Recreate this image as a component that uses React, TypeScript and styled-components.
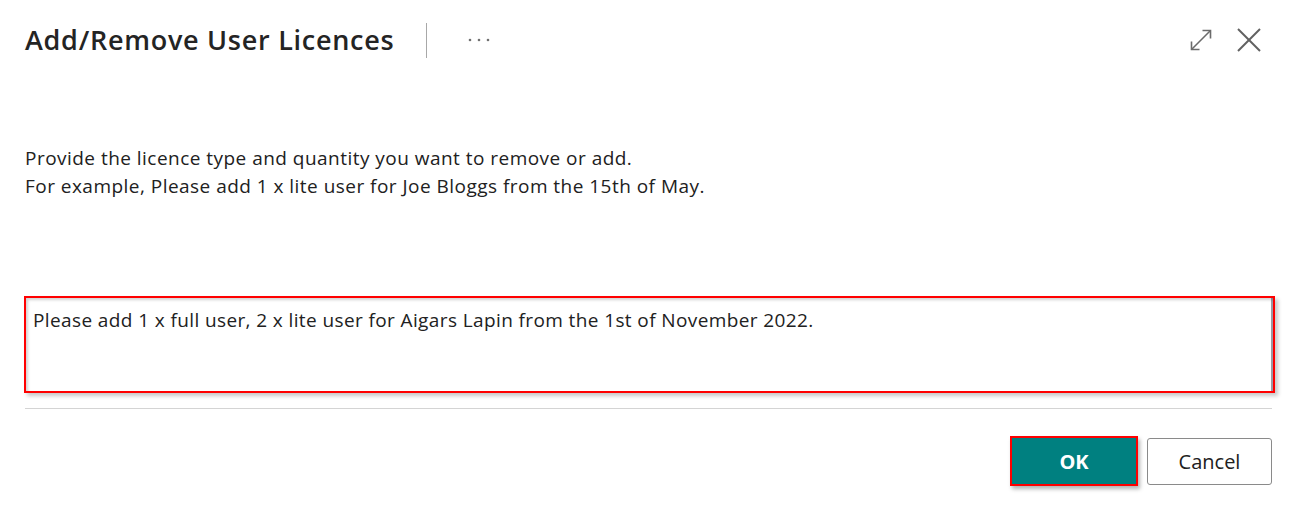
import React from "react";
import styled, { createGlobalStyle } from "styled-components";

const Global = createGlobalStyle`
  html, body { margin: 0; padding: 0; background: #ffffff; }
  body { font-family: "Open Sans", "Noto Sans", sans-serif; color: #212121; }
  * { box-sizing: border-box; }
`;

const Dialog = styled.div`
  width: 1297px;
  height: 508px;
  padding: 0 25px 0 25px;
  display: flex;
  flex-direction: column;
  background: #fff;
`;

const Header = styled.div`
  display: flex;
  align-items: center;
  height: 40px;
  margin-top: 20px;
`;

const Title = styled.h1`
  margin: 0;
  font-size: 27px;
  font-weight: 600;
  color: #242424;
  letter-spacing: 0.73px;
  line-height: 40px;
`;

const Divider = styled.div`
  width: 1px;
  height: 35px;
  background: #a8a8a8;
  margin-left: 32px;
`;

const MoreButton = styled.button`
  border: none;
  background: transparent;
  padding: 0;
  margin-left: 41px;
  display: flex;
  align-items: center;
  height: 20px;
  cursor: pointer;
`;

const HeaderActions = styled.div`
  margin-left: auto;
  margin-right: 11px;
  display: flex;
  align-items: center;
  gap: 24px;
`;

const IconButton = styled.button`
  border: none;
  background: transparent;
  padding: 0;
  width: 24px;
  height: 24px;
  display: flex;
  align-items: center;
  justify-content: center;
  cursor: pointer;
`;

const Description = styled.p`
  margin: 84px 0 0 0;
  font-size: 19px;
  letter-spacing: 0.47px;
  line-height: 28px;
  color: #212121;
`;

const Input = styled.textarea`
  display: block;
  margin-top: 96px;
  margin-left: -1px;
  width: 1251px;
  height: 97px;
  border: 2px solid #ff0000;
  padding: 10px 8px 0 7px;
  font-family: "Open Sans", "Noto Sans", sans-serif;
  font-size: 19px;
  letter-spacing: 0.39px;
  line-height: 24px;
  color: #212121;
  resize: none;
  outline: none;
  box-shadow: inset 2px 2px 3px rgba(0, 0, 0, 0.18), inset -2px 0 0 #9a9aa6,
    3px 3px 4px rgba(0, 0, 0, 0.22);
  background: #fff;
`;

const Separator = styled.hr`
  margin: 15px 0 0 0;
  border: none;
  border-top: 1px solid #d4d4d4;
  width: 1247px;
`;

const Footer = styled.div`
  display: flex;
  justify-content: flex-end;
  align-items: center;
  gap: 9px;
  margin-top: 27px;
`;

const PrimaryButton = styled.button`
  width: 128px;
  height: 50px;
  background: #008080;
  border: 2px solid #ff0000;
  color: #fff;
  font-family: "Open Sans", "Noto Sans", sans-serif;
  font-weight: 700;
  font-size: 20px;
  box-shadow: 2px 3px 4px rgba(0, 0, 0, 0.3);
  cursor: pointer;
`;

const SecondaryButton = styled.button`
  width: 125px;
  height: 47px;
  background: #fff;
  border: 1px solid #8a8a8a;
  border-radius: 3px;
  color: #212121;
  font-family: "Open Sans", "Noto Sans", sans-serif;
  font-size: 20px;
  font-weight: 400;
  cursor: pointer;
`;

export default function App() {
  return (
    <>
      <Global />
      <Dialog>
        <Header>
          <Title>Add/Remove User Licences</Title>
          <Divider />
          <MoreButton aria-label="More options">
            <svg width="22" height="6" viewBox="0 0 22 6">
              <circle cx="2" cy="3" r="1.3" fill="#707070" />
              <circle cx="11" cy="3" r="1.3" fill="#707070" />
              <circle cx="20" cy="3" r="1.3" fill="#707070" />
            </svg>
          </MoreButton>
          <HeaderActions>
            <IconButton aria-label="Expand">
              <svg width="24" height="24" viewBox="0 0 24 24" fill="none" stroke="#6b6b6b" strokeWidth="1.6">
                <path d="M2.5 21.5 L21.5 2.5" />
                <path d="M13.5 2.5 H21.5 V10.5" />
                <path d="M2.5 13.5 V21.5 H10.5" />
              </svg>
            </IconButton>
            <IconButton aria-label="Close">
              <svg width="24" height="24" viewBox="0 0 24 24" fill="none" stroke="#616161" strokeWidth="2">
                <path d="M1 1 L23 23" />
                <path d="M23 1 L1 23" />
              </svg>
            </IconButton>
          </HeaderActions>
        </Header>
        <Description>
          Provide the licence type and quantity you want to remove or add.
          <br />
          For example, Please add 1 x lite user for Joe Bloggs from the 15th of May.
        </Description>
        <Input
          readOnly
          defaultValue="Please add 1 x full user, 2 x lite user for Aigars Lapin from the 1st of November 2022."
        />
        <Separator />
        <Footer>
          <PrimaryButton>OK</PrimaryButton>
          <SecondaryButton>Cancel</SecondaryButton>
        </Footer>
      </Dialog>
    </>
  );
}
